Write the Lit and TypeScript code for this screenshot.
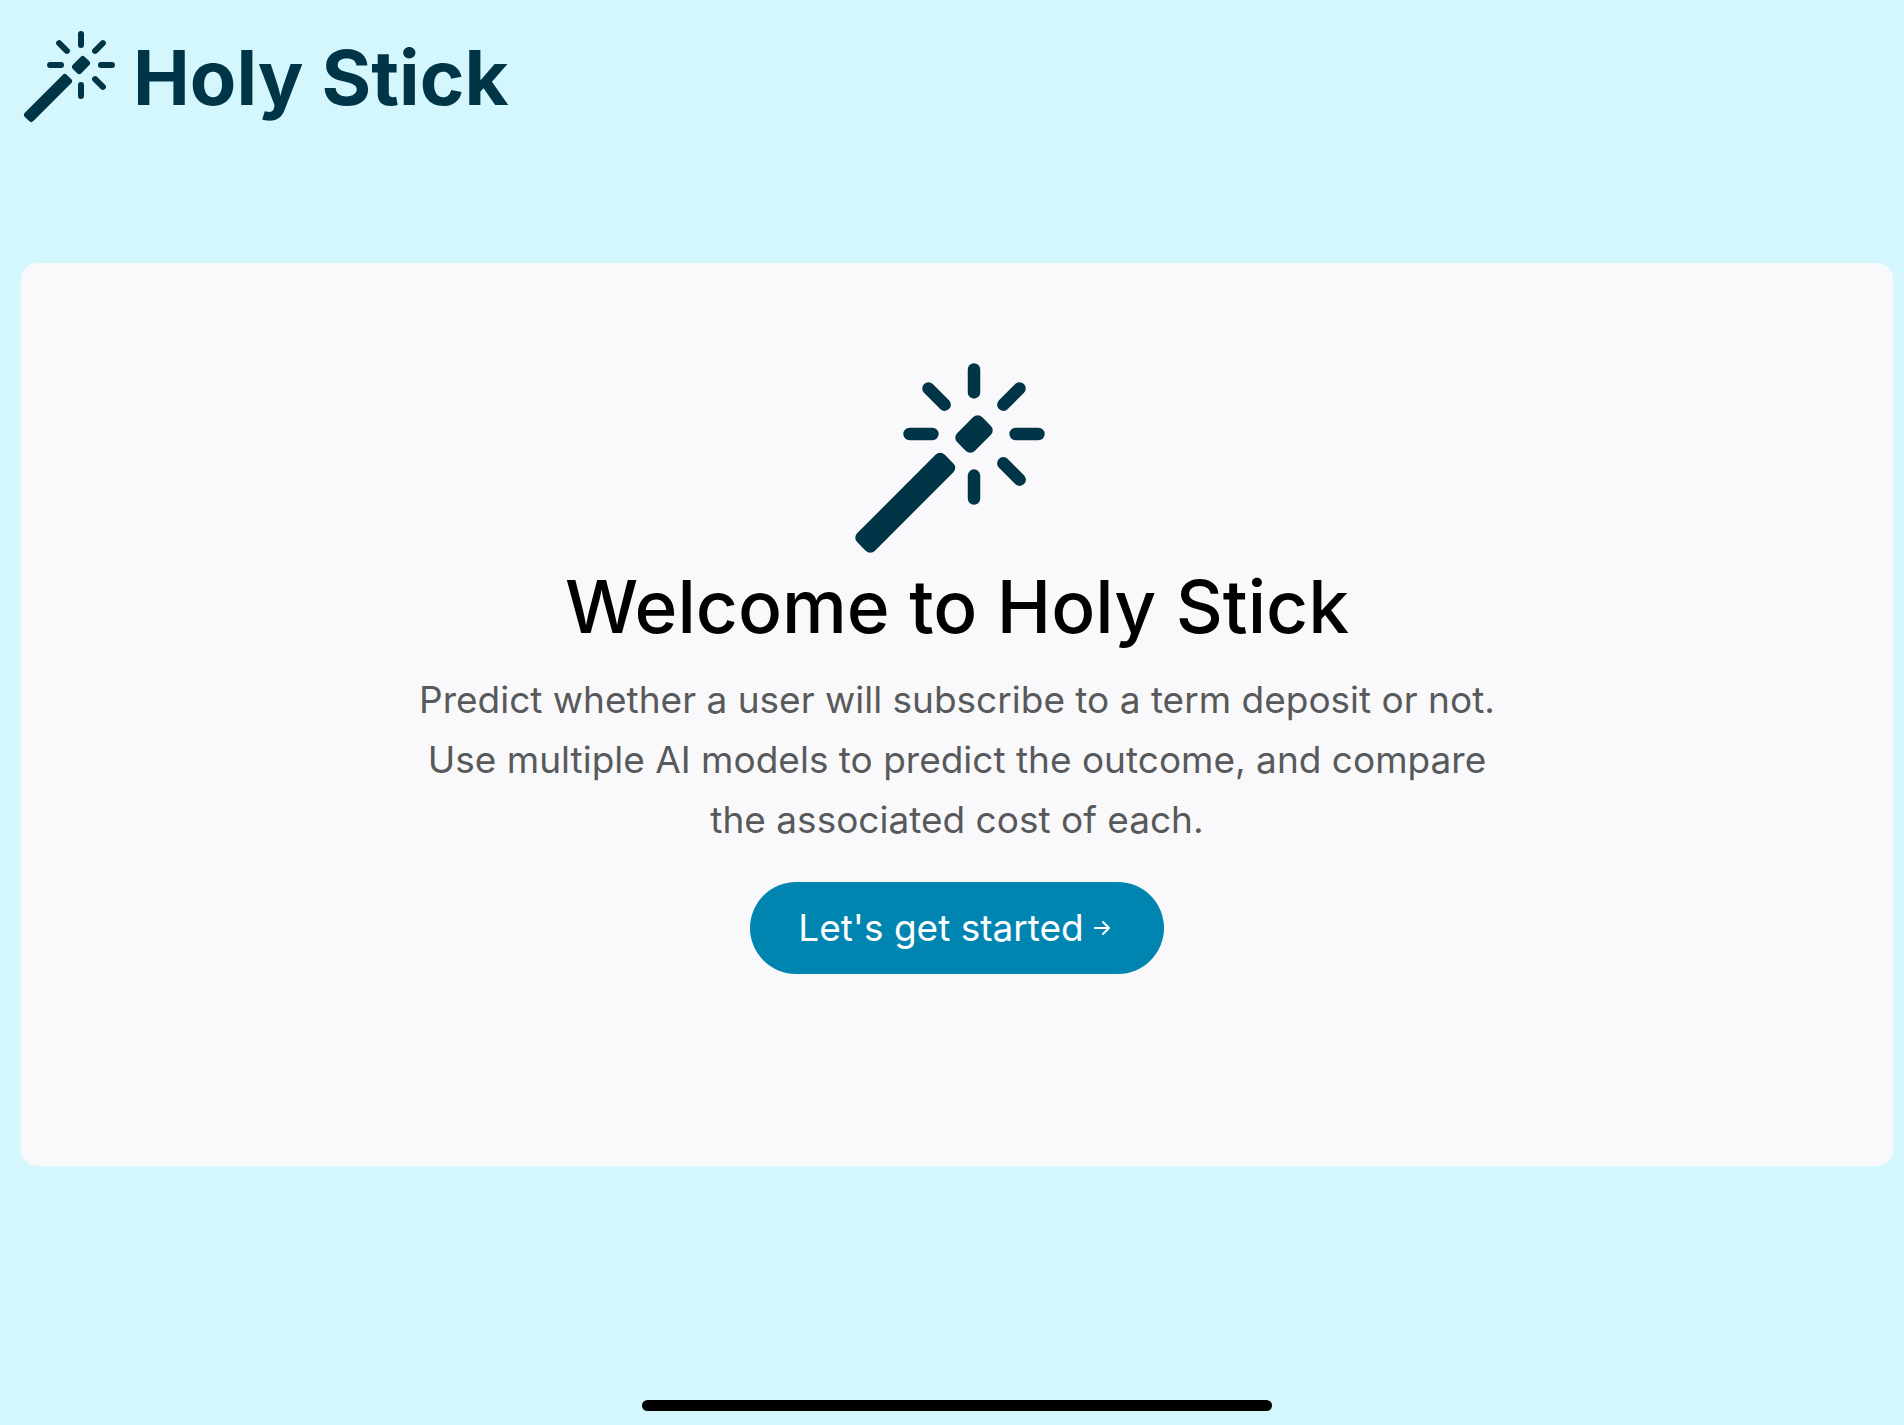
import { LitElement, html, css, svg } from "lit";
import { customElement } from "lit/decorators.js";

const wand = svg`<path d="M9.5 2.672a.5.5 0 1 0 1 0V.843a.5.5 0 0 0-1 0zm4.5.035A.5.5 0 0 0 13.293 2L12 3.293a.5.5 0 1 0 .707.707zM7.293 4A.5.5 0 1 0 8 3.293L6.707 2A.5.5 0 0 0 6 2.707zm-.621 2.5a.5.5 0 1 0 0-1H4.843a.5.5 0 1 0 0 1zm8.485 0a.5.5 0 1 0 0-1h-1.829a.5.5 0 0 0 0 1zM13.293 10A.5.5 0 1 0 14 9.293L12.707 8a.5.5 0 1 0-.707.707zM9.5 11.157a.5.5 0 0 0 1 0V9.328a.5.5 0 0 0-1 0zm1.854-5.097a.5.5 0 0 0 0-.706l-.708-.708a.5.5 0 0 0-.707 0L8.646 5.94a.5.5 0 0 0 0 .707l.708.708a.5.5 0 0 0 .707 0l1.293-1.293Zm-3 3a.5.5 0 0 0 0-.706l-.708-.708a.5.5 0 0 0-.707 0L.646 13.94a.5.5 0 0 0 0 .707l.707.707a.5.5 0 0 0 .707 0z"/>`;

@customElement("app-root")
export class AppRoot extends LitElement {
  static styles = css`
    :host {
      display: flex;
      flex-direction: column;
      box-sizing: border-box;
      min-height: 100vh;
      padding: 29px 11px 14px 21px;
      background: #d3f7fd;
      font-family: Inter, "Liberation Sans", sans-serif;
      font-size: 37px;
      line-height: 60px;
    }
    .brand {
      display: flex;
      align-items: center;
      align-self: flex-start;
      gap: 16px;
      color: #003547;
      font-size: 76px;
      font-weight: 700;
      line-height: 96px;
      text-decoration: none;
    }
    .brand-icon {
      width: 96px;
      height: 96px;
      fill: currentColor;
    }
    .card {
      display: flex;
      flex-direction: column;
      align-items: center;
      margin-top: 138px;
      padding: 96px 24px 192px;
      border-radius: 16px;
      background: #f9f9fb;
      text-align: center;
    }
    .hero-icon {
      width: 200px;
      height: 200px;
      margin-right: 16px;
      fill: #003547;
    }
    .title {
      margin: 0 0 15px;
      color: #000;
      font-size: 73px;
      font-weight: 500;
      line-height: 96px;
    }
    .lead {
      max-width: 1100px;
      margin: 0 0 32px;
      color: #58595b;
    }
    .start {
      display: flex;
      align-items: center;
      gap: 8px;
      padding: 16px 48px;
      border: 0;
      border-radius: 46px;
      background: #0085b0;
      color: #fff;
      font: inherit;
      cursor: pointer;
    }
    .arrow {
      width: 24px;
      height: 24px;
      fill: none;
      stroke: currentColor;
      stroke-width: 2;
      stroke-linecap: round;
      stroke-linejoin: round;
    }
    .home-bar {
      width: 630px;
      max-width: 100%;
      height: 11px;
      margin: auto auto 0;
      border-radius: 6px;
      background: #000;
    }
  `;

  render() {
    return html`
      <a class="brand" href="#">
        <svg class="brand-icon" viewBox="0 0 16 16" aria-hidden="true">${wand}</svg>
        <span>Holy Stick</span>
      </a>
      <main class="card">
        <svg class="hero-icon" viewBox="0 0 16 16" aria-hidden="true">${wand}</svg>
        <h1 class="title">Welcome to Holy Stick</h1>
        <p class="lead">
          Predict whether a user will subscribe to a term deposit or not. Use
          multiple AI models to predict the outcome, and compare the associated
          cost of each.
        </p>
        <button class="start" type="button">
          <span>Let's get started</span>
          <svg class="arrow" viewBox="0 0 24 24" aria-hidden="true">
            <path d="M3 12h14M11 6l6 6-6 6" />
          </svg>
        </button>
      </main>
      <div class="home-bar"></div>
    `;
  }
}
